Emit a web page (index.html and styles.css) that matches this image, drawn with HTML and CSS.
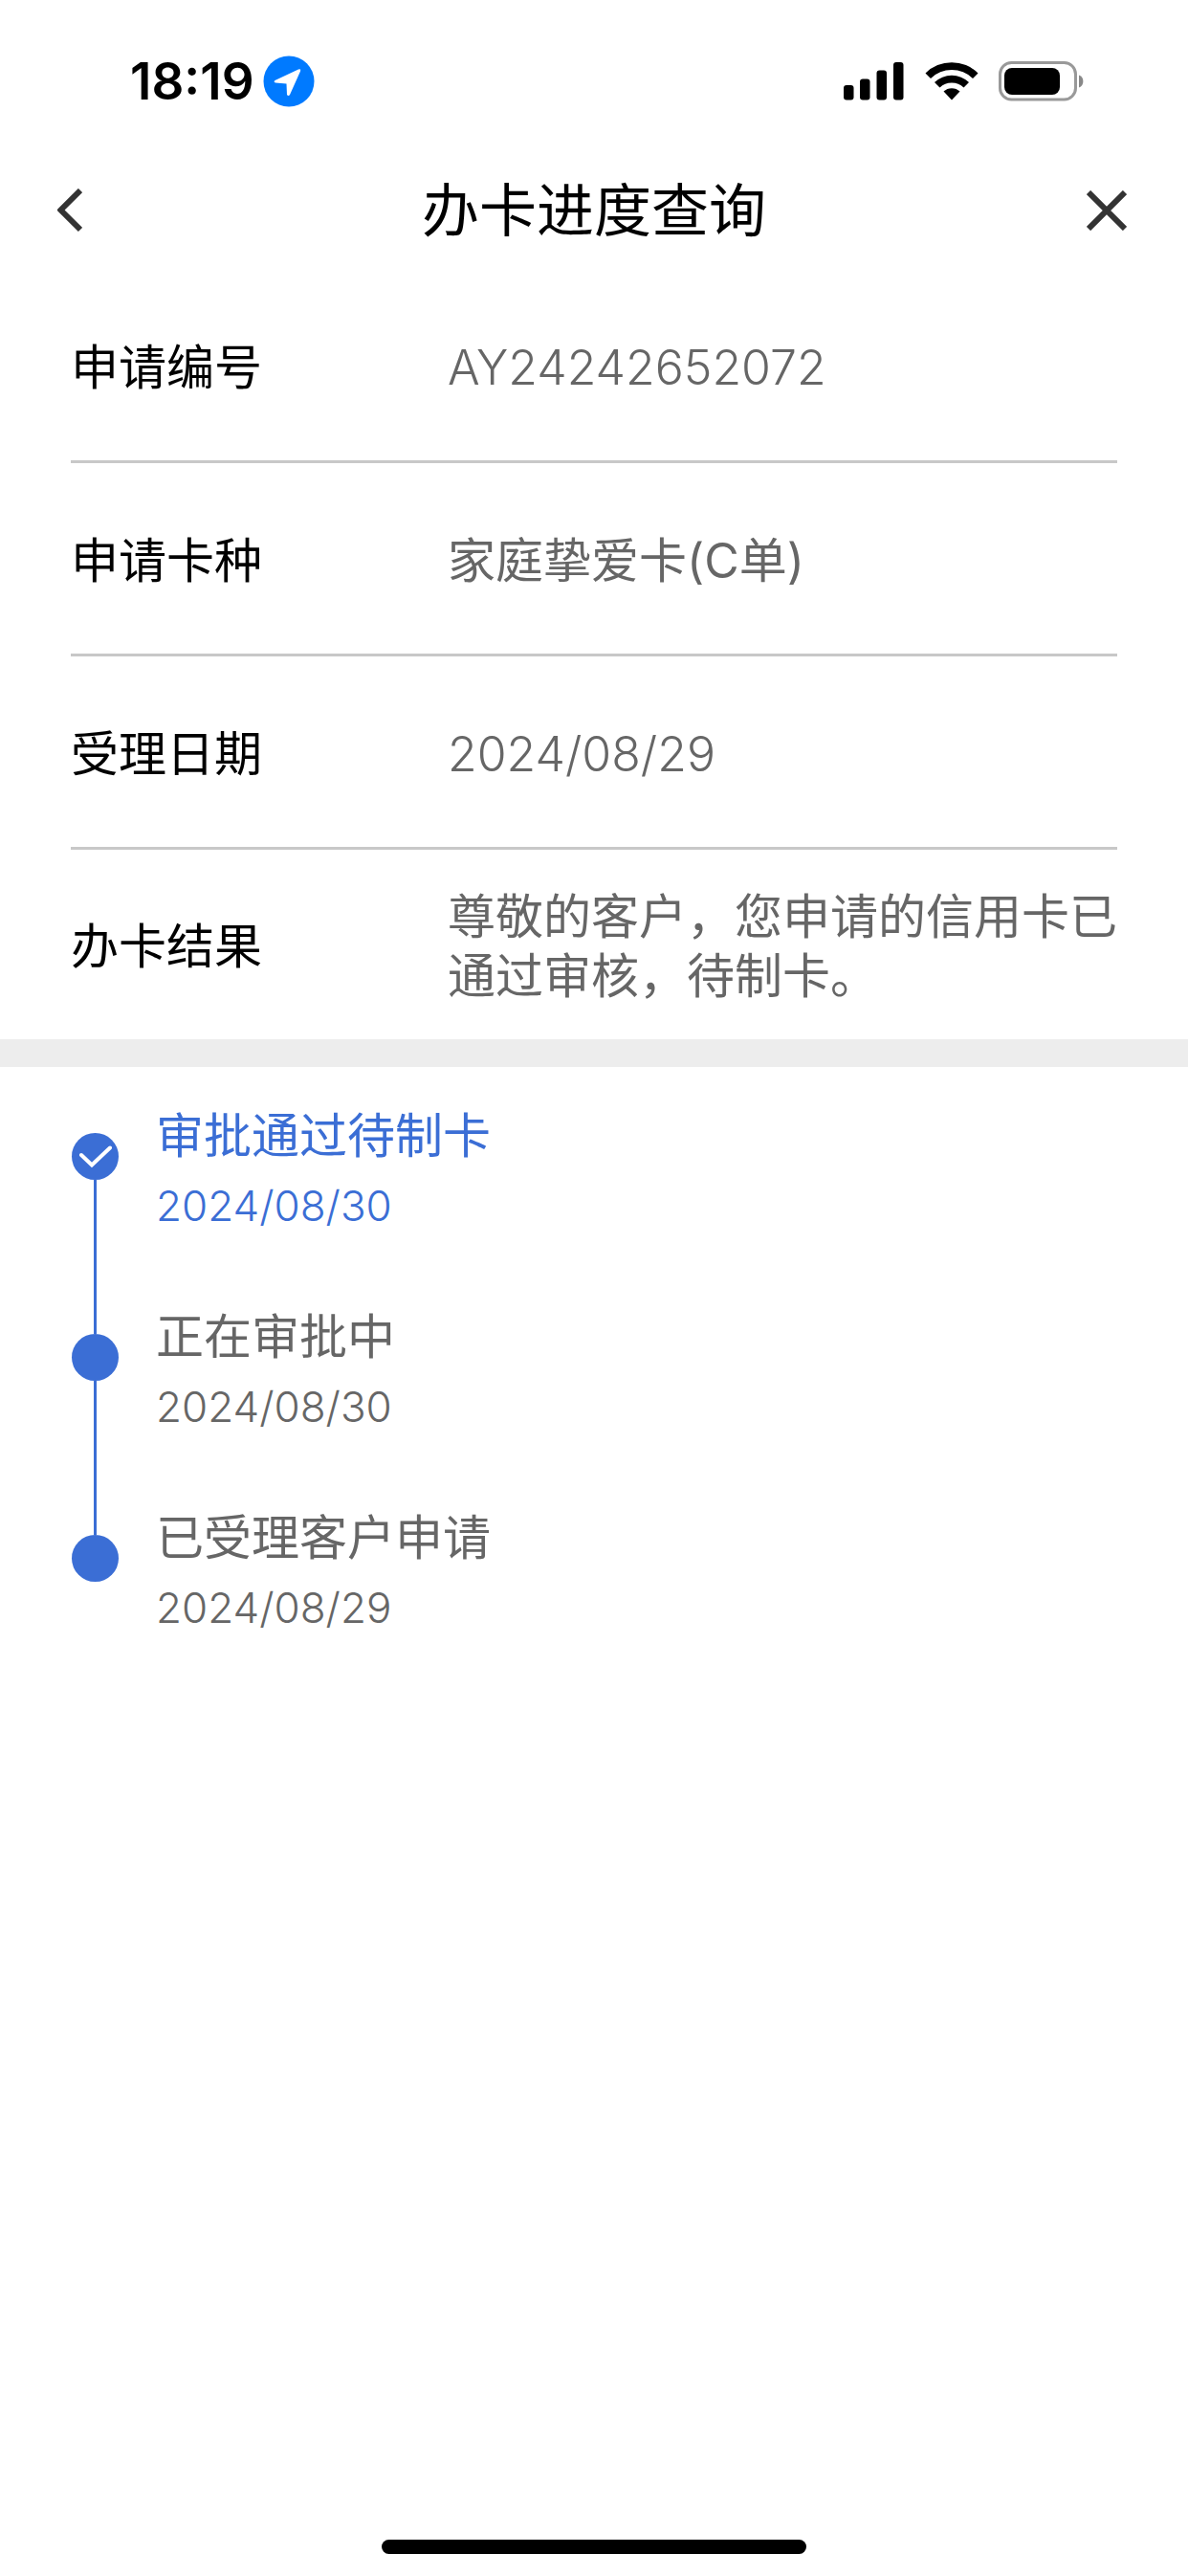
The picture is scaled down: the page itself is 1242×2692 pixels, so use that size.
FILE: index.html
```html
<!DOCTYPE html>
<html lang="zh-CN">
<head>
  <meta charset="UTF-8" />
  <meta name="viewport" content="width=device-width, initial-scale=1.0"/>
  <title>办卡进度查询</title>
  <link rel="stylesheet" href="styles.css">
</head>
<body>

  <!-- Status Bar -->
  <div class="status-bar">
    <div class="status-left">
      <span class="clock">18:19</span>
      <svg class="location-icon" viewBox="0 0 54 54" aria-hidden="true">
        <circle cx="27" cy="27" r="26.5" fill="#007aff"/>
        <path d="M12.5 26 L37 14.5 Q40 13.5 39 16.5 L28 41 Q26.5 43 25 41 L24.5 29.5 L13 28.5 Q10.5 27.5 12.5 26 Z" fill="#fff"/>
      </svg>
    </div>
    <div class="status-right">
      <svg class="signal-icon" viewBox="0 0 64 42" aria-hidden="true">
        <rect x="0" y="25" width="10.5" height="15.5" rx="3"/>
        <rect x="17" y="18.5" width="10.5" height="22" rx="3"/>
        <rect x="34.5" y="9.5" width="10.5" height="31" rx="3"/>
        <rect x="52" y="1" width="10.5" height="39.5" rx="3"/>
      </svg>
      <svg class="wifi-icon" viewBox="0 0 56 42" aria-hidden="true">
        <path d="M0.5 12.5 A39 39 0 0 1 55.5 12.5 L50 18 A31.5 31.5 0 0 0 6 18 Z"/>
        <path d="M10 22 A26 26 0 0 1 46 22 L40.5 27.5 A18 18 0 0 0 15.5 27.5 Z"/>
        <path d="M19.5 31.5 A12.5 12.5 0 0 1 36.5 31.5 L28 40.5 Z"/>
      </svg>
      <svg class="battery-icon" viewBox="0 0 90 42" aria-hidden="true">
        <rect x="1.5" y="1.5" width="79" height="38.5" rx="12" fill="none" stroke="#999" stroke-width="3"/>
        <rect x="6" y="7" width="58" height="28" rx="8"/>
        <path d="M84 14.5 A7 7 0 0 1 84 27.5 Z" fill="#888"/>
      </svg>
    </div>
  </div>

  <!-- Page Header -->
  <header class="page-header">
    <button type="button" class="nav-button" aria-label="返回">
      <svg class="back-icon" viewBox="0 0 26 46" aria-hidden="true">
        <path d="M24 2 L3.5 22.5 L24 43"/>
      </svg>
    </button>
    <h1>办卡进度查询</h1>
    <button type="button" class="nav-button" aria-label="关闭">
      <svg class="close-icon" viewBox="0 0 42 42" aria-hidden="true">
        <path d="M2 2 L40 40 M40 2 L2 40"/>
      </svg>
    </button>
  </header>

  <main>
    <!-- Application Details -->
    <dl class="details">
      <div class="detail-row">
        <dt>申请编号</dt>
        <dd class="number">AY24242652072</dd>
      </div>
      <div class="detail-row">
        <dt>申请卡种</dt>
        <dd>家庭挚爱卡(C单)</dd>
      </div>
      <div class="detail-row">
        <dt>受理日期</dt>
        <dd class="number">2024/08/29</dd>
      </div>
      <div class="detail-row">
        <dt>办卡结果</dt>
        <dd>尊敬的客户，您申请的信用卡已通过审核，待制卡。</dd>
      </div>
    </dl>

    <!-- Progress Timeline -->
    <ol class="timeline">
      <li class="step current">
        <div class="marker">
          <span class="dot">
            <svg class="check-icon" viewBox="0 0 34 24" aria-hidden="true">
              <path d="M2 10 L13 20.5 L32 2.5"/>
            </svg>
          </span>
        </div>
        <div class="step-text">
          <h2>审批通过待制卡</h2>
          <time class="number" datetime="2024-08-30">2024/08/30</time>
        </div>
      </li>
      <li class="step">
        <div class="marker"><span class="dot"></span></div>
        <div class="step-text">
          <h2>正在审批中</h2>
          <time class="number" datetime="2024-08-30">2024/08/30</time>
        </div>
      </li>
      <li class="step">
        <div class="marker"><span class="dot"></span></div>
        <div class="step-text">
          <h2>已受理客户申请</h2>
          <time class="number" datetime="2024-08-29">2024/08/29</time>
        </div>
      </li>
    </ol>
  </main>

  <div class="home-indicator"></div>

</body>
</html>
```
FILE: styles.css
```css
* {
  box-sizing: border-box;
}

body {
  margin: 0;
  min-height: 100vh;
  display: flex;
  flex-direction: column;
  font-family: Inter, "Noto Sans CJK SC", sans-serif;
  font-size: 50px;
  line-height: 62px;
  color: #000;
  background-color: #fff;
}

.number {
  font-weight: 350;
}

/* Status Bar */
.status-bar {
  display: flex;
  align-items: center;
  justify-content: space-between;
  height: 170px;
  padding: 0 108px 0 136px;
}

.status-left {
  display: flex;
  align-items: center;
  gap: 9px;
}

.status-right {
  display: flex;
  align-items: center;
  gap: 21px;
}

.clock {
  font-size: 53px;
  font-weight: 600;
}

.location-icon {
  width: 54px;
  height: 54px;
}

.signal-icon {
  width: 64px;
  height: 42px;
}

.wifi-icon {
  width: 56px;
  height: 42px;
}

.battery-icon {
  width: 90px;
  height: 42px;
}

/* Page Header */
.page-header {
  display: flex;
  align-items: center;
  justify-content: space-between;
  height: 100px;
  padding: 0 60px;
}

h1 {
  margin: 0;
  font-size: 60px;
  font-weight: 400;
}

.nav-button {
  display: flex;
  align-items: center;
  justify-content: flex-start;
  width: 46px;
  height: 88px;
  padding: 0;
  border: none;
  background: none;
  cursor: pointer;
}

.nav-button path {
  fill: none;
  stroke: #333;
  stroke-width: 6;
}

.back-icon {
  width: 26px;
  height: 46px;
}

.close-icon {
  width: 42px;
  height: 42px;
}

/* Application Details */
.details {
  margin: 0;
  padding: 12px 74px 0;
  border-bottom: 29px solid #ededed;
}

.detail-row {
  display: flex;
  align-items: center;
  min-height: 202px;
  padding-top: 4px;
  border-bottom: 3px solid #c8c8c8;
}

.detail-row:last-child {
  min-height: 198px;
  border-bottom: none;
}

dt {
  flex: 0 0 394px;
}

dd {
  flex: 1;
  margin: 0;
  color: #666;
}

/* Progress Timeline */
.timeline {
  margin: 0;
  padding: 36px 74px 0;
  list-style: none;
  color: #666;
}

.step {
  display: flex;
  gap: 38px;
  min-height: 210px;
}

.current {
  color: #3b6ed5;
}

.marker {
  display: flex;
  flex-direction: column;
  align-items: center;
  width: 51px;
}

.marker::before,
.marker::after {
  content: "";
  width: 3px;
  background-color: #3b6ed5;
}

.marker::before {
  height: 33px;
}

.marker::after {
  flex: 1;
}

.step:first-child .marker::before,
.step:last-child .marker::after {
  background-color: transparent;
}

.dot {
  display: flex;
  align-items: center;
  justify-content: center;
  width: 49px;
  height: 49px;
  border-radius: 50%;
  background-color: #3b6ed5;
}

.check-icon {
  width: 34px;
  height: 24px;
}

.check-icon path {
  fill: none;
  stroke: #fff;
  stroke-width: 4;
  stroke-linecap: round;
}

h2 {
  margin: 0;
  font-size: 50px;
  font-weight: 400;
  line-height: 72px;
}

time {
  display: block;
  font-size: 44px;
  line-height: 74px;
}

/* Home Indicator */
.home-indicator {
  width: 444px;
  height: 15px;
  margin: auto auto 23px;
  border-radius: 8px;
  background-color: #000;
}
```
